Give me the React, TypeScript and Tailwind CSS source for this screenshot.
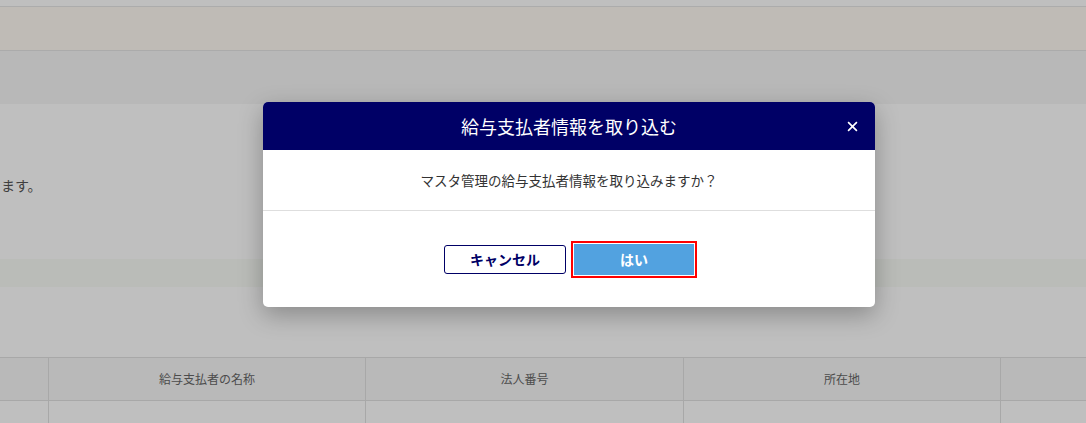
import React from "react";

const font = "font-['Noto_Sans_CJK_JP','Noto_Sans',sans-serif]";

const columns = ["", "給与支払者の名称", "法人番号", "所在地", ""];

const ImportDialog: React.FunctionComponent = () => {
  return (
    <div className="absolute left-[263px] top-[102px] w-[612px] overflow-hidden rounded-[5px] bg-white shadow-[0_8px_24px_rgba(0,0,0,0.28)]">
      {/* Header */}
      <div className="relative flex h-[48px] items-center justify-center bg-[#000066] text-[18px] text-white">
        給与支払者情報を取り込む
        <button className="absolute right-[17px] top-[19px] h-[11px] w-[11px]">
          <svg viewBox="0 0 10 10" className="h-full w-full" stroke="white" strokeWidth="1.5">
            <path d="M1 1 9 9M9 1 1 9" />
          </svg>
        </button>
      </div>

      {/* Message */}
      <div className="flex h-[60px] items-center justify-center text-[13.5px] text-[#333]">
        マスタ管理の給与支払者情報を取り込みますか？
      </div>

      {/* Actions */}
      <div className="flex h-[97px] items-center justify-center gap-2 border-t border-[#dedede]">
        <button className="h-[29px] w-[122px] rounded-[3px] border border-[#000066] bg-white text-[14px] font-bold text-[#000066]">
          キャンセル
        </button>
        <button className="h-[31px] w-[120px] rounded-none bg-[#52a2e0] text-[14px] font-bold text-white outline-2 outline-offset-1 outline-[#ff0000]">
          はい
        </button>
      </div>
    </div>
  );
};

export default function App() {
  return (
    <div className={`relative h-[423px] w-full overflow-hidden bg-white ${font}`}>
      {/* Page behind the dialog */}
      <div className="h-[7px] border-b border-[#e6e6e6] bg-white" />
      <div className="h-[44px] border-b border-[#e4e4e4] bg-[#fffaf3]" />
      <div className="h-[53px] bg-[#f6f6f6]" />
      <div className="h-[155px] pt-[71px] text-[14px] text-[#555]">
        <span className="pl-[1px]">ます。</span>
      </div>
      <div className="h-[28px] bg-[#f8fbf6]" />
      <div className="h-[70px]" />

      {/* Table */}
      <div className="border-t border-[#e0e0e0]">
        <div className="grid h-[43px] grid-cols-[48px_317px_318px_317px_1fr] border-b border-[#e0e0e0] bg-[#f7f7f7]">
          {columns.map((label, i) => (
            <div
              key={i}
              className={`flex items-center justify-center text-[12px] text-[#666] ${
                i > 0 ? "border-l border-[#e0e0e0]" : ""
              }`}
            >
              {label}
            </div>
          ))}
        </div>
        <div className="grid h-[40px] grid-cols-[48px_317px_318px_317px_1fr]">
          {columns.map((_, i) => (
            <div key={i} className={i > 0 ? "border-l border-[#e0e0e0]" : ""} />
          ))}
        </div>
      </div>

      {/* Overlay */}
      <div className="absolute inset-0 bg-black/25" />
      <ImportDialog />
    </div>
  );
}
